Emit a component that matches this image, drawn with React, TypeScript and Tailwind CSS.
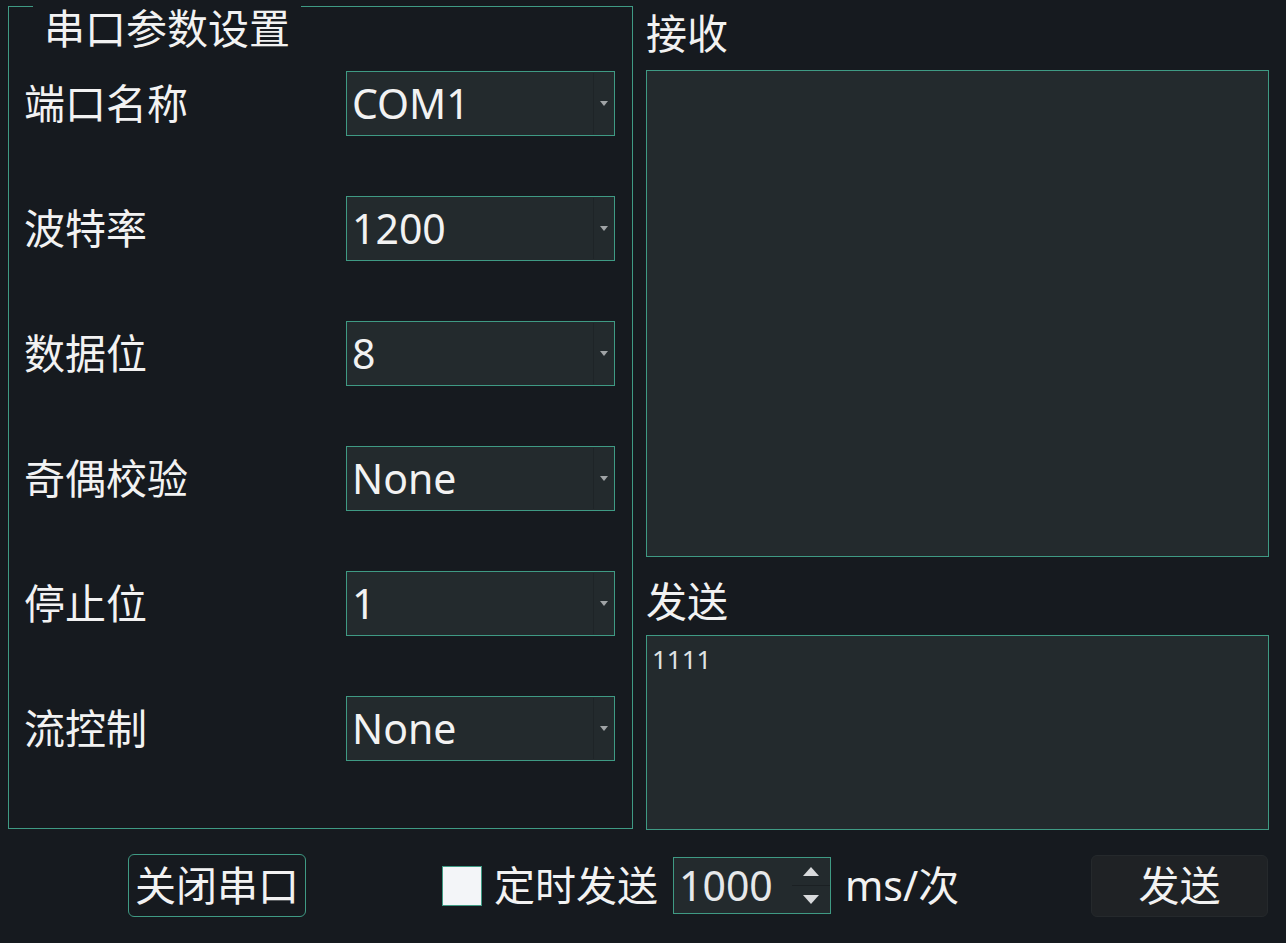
import React from 'react';

const font = { fontFamily: '"Noto Sans", "Noto Sans CJK SC", sans-serif' };

function Combo({ value }: { value: string }) {
  return (
    <div className="flex h-[65px] w-[269px] border border-[#3f9a84] bg-[#232a2d]">
      <div className="flex flex-1 items-center pl-[5px] text-[41px] leading-none text-[#f2f2f2]">{value}</div>
      <div className="flex w-[20px] items-center justify-center border-l border-[#1e2427] mr-[1px] my-[1px]">
        <svg width="8" height="5" viewBox="0 0 8 5">
          <path d="M0 0 L8 0 L4 5 Z" fill="#a0a4a6" />
        </svg>
      </div>
    </div>
  );
}

const rows = [
  ['端口名称', 'COM1'],
  ['波特率', '1200'],
  ['数据位', '8'],
  ['奇偶校验', 'None'],
  ['停止位', '1'],
  ['流控制', 'None'],
];

export default function App() {
  return (
    <div className="flex h-[943px] w-[1286px] flex-col bg-[#161a1f] text-[#f2f2f2]" style={font}>
      <div className="flex pl-[8px] pr-[17px] pt-[6px]">
        {/* 串口参数设置 */}
        <div className="relative h-[823px] w-[625px] border border-[#3f9a84]">
          <div className="absolute left-[24px] top-[-4px] h-[50px] bg-[#161a1f] px-[11px] text-[41px] leading-[50px]">
            串口参数设置
          </div>
          <div className="flex flex-col gap-[60px] pl-[15px] pr-[16px] pt-[64px]">
            {rows.map(([label, value]) => (
              <div key={label} className="flex items-center">
                <div className="w-[322px] text-[41px] leading-none">{label}</div>
                <Combo value={value} />
              </div>
            ))}
          </div>
        </div>

        {/* 接收 / 发送 */}
        <div className="ml-[13px] flex flex-1 flex-col">
          <div className="h-[54px] text-[41px] leading-[54px]">接收</div>
          <div className="mt-[10px] h-[487px] border border-[#3f9a84] bg-[#232a2d]" />
          <div className="mt-[12px] h-[64px] text-[41px] leading-[64px]">发送</div>
          <div className="mt-[2px] h-[195px] border border-[#3f9a84] bg-[#232a2d] px-[5px] pt-[8px] text-[26px] leading-[30px] text-[#dfe2e3]">
            1111
          </div>
        </div>
      </div>

      {/* bottom bar */}
      <div className="flex flex-1 items-center pb-[2px] pl-[128px] pr-[18px]">
        <button className="h-[63px] w-[178px] rounded-[6px] border border-[#3f9a84] bg-[#161a1f] text-[41px] leading-none text-[#f2f2f2]">
          关闭串口
        </button>
        <div className="ml-[136px] flex items-center">
          <div className="h-[40px] w-[40px] border border-[#3f9a84] bg-[#f3f5f8]" />
          <span className="ml-[12px] text-[41px] leading-none">定时发送</span>
          <div className="ml-[15px] flex h-[57px] w-[158px] border border-[#3f9a84] bg-[#232a2d]">
            <div className="flex flex-1 items-center pl-[5px] text-[41px] leading-none text-[#e6e8ea]">1000</div>
            <div className="flex w-[38px] flex-col">
              <div className="flex flex-1 items-center justify-center border-b border-[#1b2023]">
                <svg width="16" height="9" viewBox="0 0 16 9">
                  <path d="M0 9 L16 9 L8 0 Z" fill="#d8dadc" />
                </svg>
              </div>
              <div className="flex flex-1 items-center justify-center">
                <svg width="16" height="9" viewBox="0 0 16 9">
                  <path d="M0 0 L16 0 L8 9 Z" fill="#d8dadc" />
                </svg>
              </div>
            </div>
          </div>
          <span className="ml-[14px] text-[41px] leading-none">ms/次</span>
        </div>
        <button className="ml-auto h-[62px] w-[177px] rounded-[6px] border border-[#25292c] bg-[#1f2225] text-[41px] leading-none text-[#f2f2f2]">
          发送
        </button>
      </div>
    </div>
  );
}
